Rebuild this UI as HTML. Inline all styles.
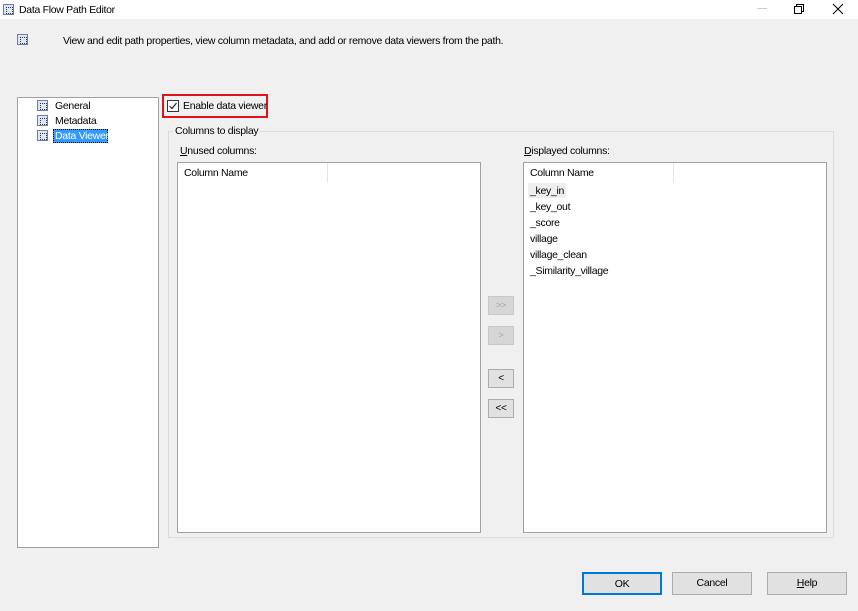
<!DOCTYPE html>
<html><head><meta charset="utf-8"><style>
*{margin:0;padding:0;box-sizing:border-box}
body{width:858px;height:611px;background:#f0f0f0;font-family:"Liberation Sans",sans-serif;font-size:10.5px;letter-spacing:-0.3px;color:#000;position:relative;overflow:hidden}
.a{position:absolute}
.t{position:absolute;white-space:nowrap}
.box{position:absolute;background:#fff;border:1px solid #a0a0a8}
.btn{position:absolute;background:#e1e1e1;border:1px solid #adadad;text-align:center}
.sb{position:absolute;background:#d6d6d6;border:1px solid #c8c8c8;color:#a0a0a0;font-size:9px;text-align:center;line-height:16px}
.ic{position:absolute;width:11px;height:11px;border:1px solid #6d7fa8;background:#dfe6f2}
.ic:after{content:"";position:absolute;left:2px;top:2px;width:5px;height:5px;border:1px dotted #333}
</style></head><body>
<div class="a" style="left:0;top:0;width:858px;height:19px;background:#fff"></div>
<div class="ic" style="left:3px;top:4px"></div>
<div class="t" style="left:19px;top:4px">Data Flow Path Editor</div>
<div class="a" style="left:757px;top:8px;width:10px;height:1px;background:#ccc"></div>
<svg class="a" style="left:793px;top:3px" width="12" height="12"><rect x="1.5" y="3.5" width="7" height="7" fill="none" stroke="#000"/><path d="M3.5 3.5V1.5H10.5V8.5H8.5" fill="none" stroke="#000"/></svg>
<svg class="a" style="left:832px;top:3px" width="12" height="12"><path d="M1 1L11 11M11 1L1 11" stroke="#000" stroke-width="1"/></svg>
<div class="ic" style="left:17px;top:34px"></div>
<div class="t" style="left:63px;top:35px">View and edit path properties, view column metadata, and add or remove data viewers from the path.</div>

<div class="box" style="left:17px;top:97px;width:142px;height:451px;border-color:#a0a0a0"></div>
<div class="ic" style="left:37px;top:100px"></div>
<div class="t" style="left:55px;top:100px">General</div>
<div class="ic" style="left:37px;top:115px"></div>
<div class="t" style="left:55px;top:115px">Metadata</div>
<div class="ic" style="left:37px;top:130px"></div>
<div class="a" style="left:53px;top:129px;width:55px;height:14px;background:#3399ff;border:1px dotted #000"></div>
<div class="t" style="left:55px;top:130px;color:#fff">Data Viewer</div>

<div class="a" style="left:162px;top:94px;width:106px;height:24px;border:2px solid #e0121a"></div>
<div class="a" style="left:167px;top:100px;width:12px;height:12px;border:1px solid #333;background:#fff"></div>
<svg class="a" style="left:168px;top:101px" width="10" height="10"><path d="M1.5 5L4 7.5L8.5 2" fill="none" stroke="#222" stroke-width="1.2"/></svg>
<div class="t" style="left:183px;top:100px">Enable data viewer</div>

<div class="a" style="left:168px;top:131px;width:666px;height:407px;border:1px solid #dcdcdc"></div>
<div class="t" style="left:173px;top:125px;background:#f0f0f0;padding:0 2px">Columns to display</div>
<div class="t" style="left:180px;top:145px"><u>U</u>nused columns:</div>
<div class="t" style="left:524px;top:145px"><u>D</u>isplayed columns:</div>

<div class="box" style="left:177px;top:162px;width:304px;height:371px"></div>
<div class="a" style="left:327px;top:163px;width:1px;height:20px;background:#e5e5e5"></div>
<div class="t" style="left:184px;top:167px">Column Name</div>

<div class="box" style="left:523px;top:162px;width:304px;height:371px"></div>
<div class="a" style="left:673px;top:163px;width:1px;height:20px;background:#e5e5e5"></div>
<div class="t" style="left:530px;top:167px">Column Name</div>
<div class="a" style="left:528px;top:183px;width:38px;height:15px;background:#efefef"></div>
<div class="t" style="left:530px;top:185px">_key_in</div>
<div class="t" style="left:530px;top:201px">_key_out</div>
<div class="t" style="left:530px;top:217px">_score</div>
<div class="t" style="left:530px;top:233px">village</div>
<div class="t" style="left:530px;top:249px">village_clean</div>
<div class="t" style="left:530px;top:265px">_Similarity_village</div>

<div class="sb" style="left:488px;top:296px;width:26px;height:19px">&gt;&gt;</div>
<div class="sb" style="left:488px;top:326px;width:26px;height:19px">&gt;</div>
<div class="btn" style="left:488px;top:369px;width:26px;height:19px;line-height:17px;font-size:10px">&lt;</div>
<div class="btn" style="left:488px;top:399px;width:26px;height:19px;line-height:17px;font-size:10px">&lt;&lt;</div>

<div class="btn" style="left:582px;top:572px;width:80px;height:23px;line-height:20px;border:2px solid #0078d7">OK</div>
<div class="btn" style="left:672px;top:572px;width:80px;height:23px;line-height:21px">Cancel</div>
<div class="btn" style="left:767px;top:572px;width:80px;height:23px;line-height:21px"><u>H</u>elp</div>
</body></html>
